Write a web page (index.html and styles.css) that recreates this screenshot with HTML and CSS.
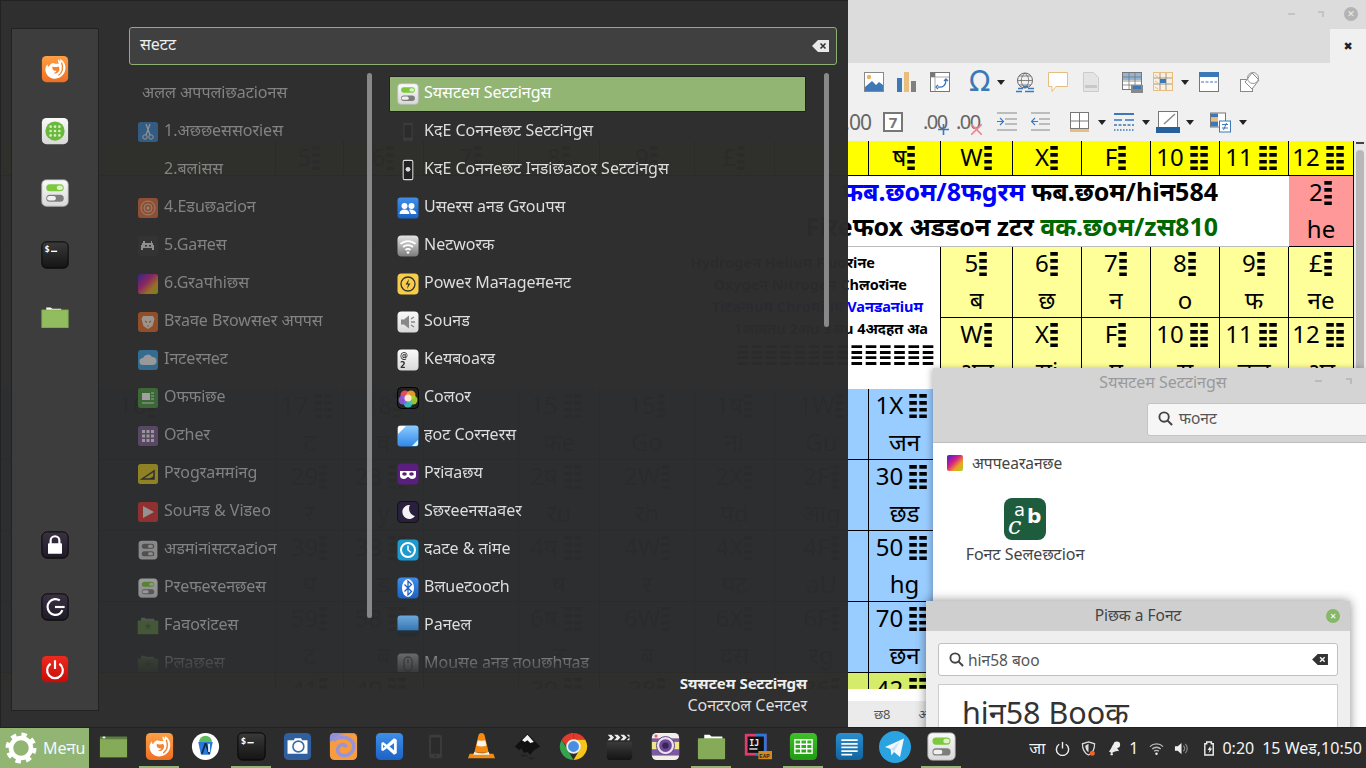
FILE: index.html
```html
<!DOCTYPE html>
<html lang="en">
<head>
<meta charset="utf-8">
<title>Desktop</title>
<link rel="stylesheet" href="styles.css">
</head>
<body>
<svg class="defs" width="0" height="0" aria-hidden="true">
  <defs>
    <linearGradient id="gFox" x1="0" y1="0" x2="0" y2="1"><stop offset="0" stop-color="#ff9f45"/><stop offset="1" stop-color="#ef6f22"/></linearGradient>
    <linearGradient id="gLight" x1="0" y1="0" x2="0" y2="1"><stop offset="0" stop-color="#fafafa"/><stop offset="1" stop-color="#d8d8d8"/></linearGradient>
    <linearGradient id="gDark" x1="0" y1="0" x2="0" y2="1"><stop offset="0" stop-color="#3a3a3a"/><stop offset="1" stop-color="#141414"/></linearGradient>
    <linearGradient id="gPurple" x1="0" y1="0" x2="0" y2="1"><stop offset="0" stop-color="#3a3143"/><stop offset="1" stop-color="#1e1a26"/></linearGradient>
    <linearGradient id="gRed" x1="0" y1="0" x2="0" y2="1"><stop offset="0" stop-color="#ee2a1e"/><stop offset="1" stop-color="#c80b08"/></linearGradient>
    <linearGradient id="gBlue" x1="0" y1="0" x2="0" y2="1"><stop offset="0" stop-color="#3f8fe8"/><stop offset="1" stop-color="#1b62c4"/></linearGradient>
    <linearGradient id="gGray" x1="0" y1="0" x2="0" y2="1"><stop offset="0" stop-color="#e4e4e4"/><stop offset="1" stop-color="#7c7c7c"/></linearGradient>
    <linearGradient id="gRainbow" x1="0" y1="0" x2="1" y2="1"><stop offset="0" stop-color="#3a22d0"/><stop offset=".4" stop-color="#d21e8c"/><stop offset=".7" stop-color="#f0a020"/><stop offset="1" stop-color="#9fd820"/></linearGradient>
    <linearGradient id="gSky" x1="0" y1="0" x2="0" y2="1"><stop offset="0" stop-color="#8ecbff"/><stop offset="1" stop-color="#2f88e8"/></linearGradient>
    <linearGradient id="gPanel" x1="0" y1="0" x2="0" y2="1"><stop offset="0" stop-color="#6ea8dc"/><stop offset=".7" stop-color="#3678b4"/><stop offset=".72" stop-color="#24303c"/><stop offset="1" stop-color="#2a2a2a"/></linearGradient>
    <linearGradient id="gGreen" x1="0" y1="0" x2="0" y2="1"><stop offset="0" stop-color="#3fc12a"/><stop offset="1" stop-color="#209a12"/></linearGradient>
    <linearGradient id="gWriter" x1="0" y1="0" x2="0" y2="1"><stop offset="0" stop-color="#2a8ed0"/><stop offset="1" stop-color="#10649e"/></linearGradient>

    <symbol id="toggles" viewBox="0 0 32 32">
      <rect x="1" y="1" width="30" height="30" rx="5" fill="url(#gLight)" stroke="#bbb"/>
      <rect x="6" y="6" width="20" height="8" rx="4" fill="#7cc83e"/><rect x="18" y="7.5" width="7" height="5" rx="2.5" fill="#dff0c8"/>
      <rect x="6" y="18" width="20" height="8" rx="4" fill="#7d7d7d"/><rect x="7" y="19.5" width="10" height="5" rx="2.5" fill="#f0f0f0"/>
    </symbol>
    <symbol id="togglesGray" viewBox="0 0 32 32">
      <rect x="1" y="1" width="30" height="30" rx="5" fill="#d6d6d6"/>
      <rect x="6" y="6" width="20" height="8" rx="4" fill="#6d6d6d"/><rect x="16" y="7.5" width="8" height="5" rx="2.5" fill="#dedede"/>
      <rect x="6" y="18" width="20" height="8" rx="4" fill="#6d6d6d"/><rect x="16" y="19.5" width="8" height="5" rx="2.5" fill="#dedede"/>
    </symbol>
    <symbol id="fox" viewBox="0 0 32 32">
      <rect x="1" y="1" width="30" height="30" rx="5" fill="url(#gFox)"/>
      <path d="M22 4.500c5 3 7 8 5.500 13.500-1.500 5.500-6.500 9-12 9C9.500 27 5 22 5 16.500c0-2.500 1-4.500 2.500-6 0 1.500.5 2.500 1.500 3 .5-2 2-3.500 4.500-4.500 2 1 4.500 1 7 1-1-2-1.500-4-1-5 1 0 2 1.500 2.500 3z" fill="#fff"/>
      <path d="M23.500 8.500c2 5.500 1 11.500-3.500 15" fill="none" stroke="#f58431" stroke-width="1.500"/>
      <path d="M13 13c2 1 5 1 7 0 1.500 2 1.500 4.500 0 6-1.500 2-4 2.500-6 1.500 2 0 3.500-1 3.500-2.500-2 .5-4-.5-4.500-2.500z" fill="#f58431"/>
    </symbol>
    <symbol id="terminal" viewBox="0 0 32 32">
      <rect x="1" y="1" width="30" height="30" rx="5" fill="url(#gDark)" stroke="#000"/>
      <text x="4" y="13" class="term-glyph">$</text><rect x="11.500" y="11" width="7" height="1.600" fill="#fff"/>
    </symbol>
    <symbol id="folderBright" viewBox="0 0 32 32">
      <path d="M6 5h5l2 1.5h10V9H6z" fill="#fff"/><rect x="1" y="8" width="30" height="20" fill="#92bd5e" stroke="#84ad52"/>
    </symbol>
    <symbol id="folderDim" viewBox="0 0 32 32">
      <path d="M6 4h5l2 1.5h12V9H6z" fill="#777"/><rect x="1" y="8" width="30" height="20" rx="1" fill="#5a7a42"/>
      <path d="M16 11l1.600 3.400 3.600.4-2.700 2.400.8 3.600-3.300-1.900-3.300 1.900.8-3.600-2.700-2.400 3.600-.4z" fill="#45602f"/>
    </symbol>
    <symbol id="phone" viewBox="0 0 32 32">
      <rect x="9" y="3" width="14" height="26" rx="2" fill="#3c3c3c"/><rect x="11" y="6" width="10" height="18" fill="#2b2b2b"/><circle cx="16" cy="26.500" r="1" fill="#2b2b2b"/>
    </symbol>
  </defs>
</svg>

<div class="desktop">
  <main class="workspace">

    <section class="office">
      <div class="office-title">
        <span class="win-dash"></span><span class="win-max"></span><span class="win-close">✕</span>
        <span class="doc-close">✖</span>
      </div>
      <div class="toolbar tb-one">
        <svg class="t20" viewBox="0 0 20 20"><rect x=".5" y=".5" width="19" height="19" fill="#fff" stroke="#888"/><circle cx="5" cy="5" r="2.200" fill="#e8b462"/><path d="M1 19v-4l7-6 4 4 3-3 4 3v6z" fill="#3f78b4"/></svg>
        <svg class="t19 m13" viewBox="0 0 19 20"><rect x="0" y="6" width="5" height="14" fill="#3a78b8"/><rect x="7" y="0" width="5" height="20" fill="#e8be80"/><rect x="14" y="9" width="5" height="11" fill="#808080"/></svg>
        <svg class="t20 m14" viewBox="0 0 20 20"><rect x=".5" y=".5" width="19" height="19" fill="#fff" stroke="#777"/><path d="M1 5h18M5 1v18" stroke="#aaa"/><rect x="1" y="1" width="4" height="4" fill="#777"/><path d="M8 15c5 1 8-2 8-7M14 9l2-2 2 2M8 13l-2 2 2 2" fill="none" stroke="#3a78b8" stroke-width="1.300"/></svg>
        <span class="omega m19">Ω</span>
        <span class="caret m8"></span>
        <svg class="t21 m10" viewBox="0 0 21 20"><circle cx="10" cy="8" r="7.500" fill="none" stroke="#666"/><path d="M2.500 8h15M10 .5c-5 5-5 10 0 15M10 .5c5 5 5 10 0 15M4 3.500h12M4 12.500h12" fill="none" stroke="#666" stroke-width=".8"/><path d="M3 16h5M13 16h6M1 19h6M10 19h9M8 14h5" stroke="#3a78b8" stroke-width="1.500"/></svg>
        <svg class="t20 m12" viewBox="0 0 20 20"><path d="M.5.500h19v14H8l-4 5v-5H.5z" fill="#fff" stroke="#e8be80"/></svg>
        <svg class="t16 m15" viewBox="0 0 16 20"><path d="M.5.500h10l5 5v14H.5z" fill="#e4e4e4" stroke="#ccc"/><rect x="2" y="13" width="12" height="3" fill="#c8c8c8"/></svg>
        <svg class="t21 m23" viewBox="0 0 21 21"><rect x=".5" y=".5" width="19" height="17" fill="#fff" stroke="#777"/><rect x="1" y="1" width="18" height="7" fill="#92b4d8"/><path d="M1 5h18M1 9h18M1 13h18M7 1v17M13 1v17" stroke="#777" stroke-width=".8"/><rect x="9" y="13" width="12" height="8" fill="#888"/><rect x="11" y="14" width="8" height="3" fill="#3a78b8"/></svg>
        <svg class="t20 m10" viewBox="0 0 20 20"><rect x=".5" y=".5" width="19" height="18" fill="#fbf0dd" stroke="#e8be80"/><path d="M1 6h18M1 12h18M7 1v17M13 1v17" stroke="#777" stroke-width=".7"/><rect x="7" y="7" width="6" height="4" fill="#3a78b8"/><path d="M2 3l3 2M2 9l3 2M2 15l3 2" stroke="#e8be80"/></svg>
        <span class="caret m8"></span>
        <svg class="t20 m10" viewBox="0 0 20 20"><rect x=".5" y="3" width="19" height="16.500" fill="#fff" stroke="#777"/><rect x="0" y="0" width="20" height="5" fill="#3a78b8"/><path d="M2 10h16" stroke="#3a78b8" stroke-dasharray="3 1.500"/></svg>
        <svg class="t20 m21" viewBox="0 0 20 20"><rect x=".5" y="7.500" width="12" height="12" fill="#fff" stroke="#888"/><path d="M12 1l7 7-7 9-7-7z" fill="#fff" stroke="#888"/><circle cx="13" cy="6" r="5.500" fill="none" stroke="#999"/></svg>
      </div>
      <div class="toolbar tb-two">
        <span class="dec-text">.00</span>
        <span class="seven m12">7</span>
        <span class="dec-add m20">.00<svg class="t-add" viewBox="0 0 11 11"><path d="M5.500 0v11M0 5.500h11" stroke="#3a78b8" stroke-width="1.600"/></svg></span>
        <span class="dec-add m10">.00<svg class="t-add" viewBox="0 0 11 11"><path d="M0 0l11 11M11 0L0 11" stroke="#e88a94" stroke-width="1.600"/></svg></span>
        <svg class="t20 m18" viewBox="0 0 20 20"><path d="M0 1h20M8 7h12M8 12h12M0 18h20" stroke="#888"/><path d="M0 9.500h6M3 6l3.500 3.500L3 13" fill="none" stroke="#3a78b8" stroke-width="1.100"/></svg>
        <svg class="t19 m14" viewBox="0 0 19 20"><path d="M0 1h19M8 7h11M8 12h11M0 18h19" stroke="#888"/><path d="M1 9.500h6M4 6L.5 9.500 4 13" fill="none" stroke="#3a78b8" stroke-width="1.100"/></svg>
        <svg class="t19 m20" viewBox="0 0 19 20"><rect x=".5" y=".5" width="18" height="16" fill="#fff" stroke="#777"/><path d="M9.500 1v16M1 9h18" stroke="#777"/><rect x="0" y="17" width="19" height="3" fill="#e8be80"/></svg>
        <span class="caret m9"></span>
        <svg class="t20 m8" viewBox="0 0 20 18"><path d="M0 1h20" stroke="#3a78b8" stroke-width="2"/><path d="M0 7h8M11 7h9" stroke="#3a78b8" stroke-width="1.500"/><path d="M0 12h20" stroke="#3a78b8" stroke-width="1.500" stroke-dasharray="3 1.500"/><path d="M0 17h20" stroke="#3a78b8" stroke-width="1.500" stroke-dasharray="1.500 1.500"/></svg>
        <span class="caret m8"></span>
        <svg class="t24 m6" viewBox="0 0 24 22"><rect x="2.500" y=".5" width="19" height="16" fill="#fff" stroke="#777"/><path d="M8 13L19 3" stroke="#888" stroke-width="1.500"/><rect x="0" y="16" width="24" height="6" fill="#27609c"/></svg>
        <span class="caret m6"></span>
        <svg class="t21 m16" viewBox="0 0 21 20"><rect x=".5" y=".5" width="15" height="14" fill="#fff" stroke="#777"/><rect x="1" y="1" width="7" height="4" fill="#3a78b8"/><rect x="1" y="5" width="7" height="4" fill="#e8be80"/><rect x="1" y="9" width="7" height="5" fill="#3a78b8"/><rect x="9.500" y="8.500" width="11" height="11" fill="#fff" stroke="#3a78b8"/><path d="M12 12h6M12 15.500h6M13.500 17.500l3-7" stroke="#3a78b8"/></svg>
        <span class="caret m8"></span>
      </div>

      <div class="sheet">
        <!-- row 1 -->
        <div class="c y"></div><div class="c y">5<span class="s">≣</span></div><div class="c y">6<span class="s">≣</span></div><div class="c y">7<span class="s">≣</span></div><div class="c y">8<span class="s">≣</span></div><div class="c y">9<span class="s">≣</span></div><div class="c y">£<span class="s">≣</span></div><div class="c y"></div>
        <div class="c y">ष<span class="s">≣</span></div><div class="c y">W<span class="s">≣</span></div><div class="c y">X<span class="s">≣</span></div><div class="c y">F<span class="s">≣</span></div><div class="c y">10<span class="s">≣≣</span></div><div class="c y">11<span class="s">≣≣</span></div><div class="c y">12<span class="s">≣≣</span></div>
        <!-- row 2 -->
        <div class="c merged">
          <p><b class="blue">फब.छoम/8फgरम</b> <b>फब.छoम/hiन584</b></p>
          <p><b>Fiरeफox अडडoन zटर</b> <b class="green">वक.छoम/zस810</b></p>
        </div>
        <div class="c pink">2<span class="s">≣</span><br>he</div>
        <!-- rows 3 and 4 -->
        <div class="c notes">
          <p class="l1">Hydrogeन Heliuम Fluoरiनe</p>
          <p class="l2">Oxygeन Nitrogeन Chलoरiनe</p>
          <p class="l3 blue">Tiटaनiuम Chroमiuम Vaनडaनiuम</p>
          <p class="l4">1आवतu 2अu 3अu 4अदहत अa</p>
          <p class="l5"><span class="s">≣≣≣≣≣≣≣≣≣≣≣≣≣≣</span></p>
        </div>
        <div class="c py">5<span class="s">≣</span><br>ब</div><div class="c py">6<span class="s">≣</span><br>छ</div><div class="c py">7<span class="s">≣</span><br>न</div><div class="c py">8<span class="s">≣</span><br>o</div><div class="c py">9<span class="s">≣</span><br>फ</div><div class="c py">£<span class="s">≣</span><br>नe</div>
        <div class="c py">W<span class="s">≣</span><br>अल</div><div class="c py">X<span class="s">≣</span><br>सi</div><div class="c py">F<span class="s">≣</span><br>प</div><div class="c py">10<span class="s">≣≣</span><br>स</div><div class="c py">11<span class="s">≣≣</span><br>छल</div><div class="c py">12<span class="s">≣≣</span><br>अर</div>
        <!-- rows 5 to 9 -->
        <div class="c b">16<span class="s">≣</span></div><div class="c b">17<span class="s">≣≣</span><br>ट</div><div class="c b">18<span class="s">≣</span><br>व</div><div class="c b"></div><div class="c b">15<span class="s">≣≣</span><br>फe</div><div class="c b">15<span class="s">≣</span><br>Go</div><div class="c b">1ष<span class="s">≣</span><br>नi</div><div class="c b">1W<span class="s">≣</span><br>Gu</div><div class="c b">1X<span class="s">≣≣</span><br>जन</div><div class="c b rest"></div>
        <div class="c b"></div><div class="c b">29<span class="s">≣</span><br>र</div><div class="c b">28<span class="s">≣≣</span><br>y</div><div class="c b"></div><div class="c b">2ष<span class="s">≣≣</span><br>रu</div><div class="c b">2W<span class="s">≣</span><br>रh</div><div class="c b">2X<span class="s">≣</span><br>पd</div><div class="c b">2F<span class="s">≣</span><br>आg</div><div class="c b">30<span class="s">≣≣</span><br>छड</div><div class="c b rest"></div>
        <div class="c b"></div><div class="c b">39<span class="s">≣</span><br>प</div><div class="c b">38<span class="s">≣≣</span><br>ड</div><div class="c b"></div><div class="c b">4ष<span class="s">≣≣</span><br>ष</div><div class="c b">4W<span class="s">≣</span><br>र</div><div class="c b">4X<span class="s">≣</span><br>पट</div><div class="c b">4F<span class="s">≣</span><br>aU</div><div class="c b">50<span class="s">≣≣</span><br>hg</div><div class="c b rest"></div>
        <div class="c b"></div><div class="c b">59<span class="s">≣</span><br>ट</div><div class="c b">58<span class="s">≣≣</span><br>ब</div><div class="c b"></div><div class="c b">6ष<span class="s">≣≣</span><br>ठ</div><div class="c b">6W<span class="s">≣</span><br>ब</div><div class="c b">6X<span class="s">≣</span><br>दस</div><div class="c b">6F<span class="s">≣</span><br>रg</div><div class="c b">70<span class="s">≣≣</span><br>छन</div><div class="c b rest"></div>
        <div class="c lime"></div><div class="c lime">41<span class="s">≣</span></div><div class="c lime">40<span class="s">≣≣</span></div><div class="c lime"></div><div class="c lime">39<span class="s">≣≣</span></div><div class="c lime">38<span class="s">≣</span></div><div class="c lime">37<span class="s">≣</span></div><div class="c lime">36<span class="s">≣</span></div><div class="c lime">42<span class="s">≣≣</span></div><div class="c lime rest"></div>
      </div>
      <div class="sheet-gap"></div>
      <div class="tabbar"><span>छ8</span><span class="tab-next">अ</span></div>
      <div class="vscroll"><span class="vscroll-top"></span><span class="vscroll-thumb"></span></div>
    </section>

    <section class="settings">
      <header class="settings-head">
        <div class="settings-title">Sयसटeम Seटटiनgस<span class="sw-dash"></span><span class="sw-max"></span></div>
        <div class="settings-search"><svg class="mag" viewBox="0 0 16 16"><circle cx="6.500" cy="6.500" r="5" fill="none" stroke="#444" stroke-width="2"/><path d="M10 10l5 5" stroke="#444" stroke-width="2.200"/></svg>फoनट</div>
      </header>
      <div class="settings-body">
        <div class="settings-group"><svg class="i16" viewBox="0 0 16 16"><rect width="16" height="16" rx="2" fill="url(#gRainbow)"/></svg>अपपeaरaनछe</div>
        <div class="settings-item">
          <svg class="i42" viewBox="0 0 42 42"><rect width="42" height="42" rx="8" fill="#1e5c3e"/><text x="10" y="18" class="font-a">a</text><text x="4" y="36" class="font-c">c</text><text x="23" y="25" class="font-b">b</text></svg>
          <span>Foनट Seलeछटioन</span>
        </div>
      </div>
    </section>

    <section class="picker">
      <div class="picker-title">Piछक a Foनट<span class="picker-close">✕</span></div>
      <div class="picker-body">
        <div class="picker-search"><svg class="mag" viewBox="0 0 16 16"><circle cx="6.500" cy="6.500" r="5" fill="none" stroke="#444" stroke-width="2"/><path d="M10 10l5 5" stroke="#444" stroke-width="2.200"/></svg><span class="picker-query">hiन58 बoo</span>
          <svg class="clear" viewBox="0 0 18 14"><path d="M6 1h11v12H6L0 7z" fill="#333"/><path d="M8.500 4.500l5 5M13.500 4.500l-5 5" stroke="#f4f4f4" stroke-width="1.600"/></svg></div>
        <div class="picker-list">hiन58 Booक</div>
      </div>
    </section>

    <nav class="menu">
      <aside class="rail">
        <svg class="r28" viewBox="0 0 32 32"><use href="#fox"/></svg>
        <svg class="r28" viewBox="0 0 32 32"><rect x="1" y="1" width="30" height="30" rx="5" fill="url(#gLight)"/><circle cx="16" cy="16" r="11" fill="#6ab83c"/><g fill="#d6efc2"><circle cx="11" cy="11" r="1.500"/><circle cx="16" cy="11" r="1.500"/><circle cx="21" cy="11" r="1.500"/><circle cx="11" cy="16" r="1.500"/><circle cx="16" cy="16" r="1.500"/><circle cx="21" cy="16" r="1.500"/><circle cx="11" cy="21" r="1.500"/><circle cx="16" cy="21" r="1.500"/><circle cx="21" cy="21" r="1.500"/></g></svg>
        <svg class="r28" viewBox="0 0 32 32"><use href="#toggles"/></svg>
        <svg class="r28" viewBox="0 0 32 32"><use href="#terminal"/></svg>
        <svg class="r28" viewBox="0 0 32 32"><use href="#folderBright"/></svg>
        <span class="rail-space"></span>
        <svg class="r28" viewBox="0 0 32 32"><rect x="1" y="1" width="30" height="30" rx="6" fill="url(#gPurple)" stroke="#000"/><path d="M11 15v-4a5 5 0 0 1 10 0v4" fill="none" stroke="#fff" stroke-width="2.500"/><rect x="8" y="14" width="16" height="12" rx="1" fill="#fff"/></svg>
        <svg class="r28" viewBox="0 0 32 32"><rect x="1" y="1" width="30" height="30" rx="6" fill="url(#gPurple)" stroke="#000"/><path d="M21.500 8.500a9 9 0 1 0 0 15c1.500-1 2.300-2.500 2.900-4" fill="none" stroke="#fff" stroke-width="2.500"/><path d="M16 16h11" stroke="#fff" stroke-width="2.500"/></svg>
        <svg class="r28" viewBox="0 0 32 32"><rect x="1" y="1" width="30" height="30" rx="5" fill="url(#gRed)"/><path d="M11 10a9 9 0 1 0 10 0" fill="none" stroke="#fff" stroke-width="2.500"/><path d="M16 6v10" stroke="#fff" stroke-width="2.500"/></svg>
      </aside>

      <div class="menu-main">
        <div class="menu-search"><span>सeटट</span>
          <svg class="clear-light" viewBox="0 0 18 14"><path d="M6 1h11v12H6L0 7z" fill="#e8e8e8"/><path d="M8.500 4.500l5 5M13.500 4.500l-5 5" stroke="#333" stroke-width="1.600"/></svg>
        </div>
        <div class="menu-cols">
          <ul class="cats">
            <li class="cat cat-all">अलल अपपलiछaटioनस</li>
            <li class="cat"><svg class="i20" viewBox="0 0 20 20"><rect width="20" height="20" rx="2.500" fill="#3a82c8"/><path d="M12 2L8 13M8 2l4 11" stroke="#e8e8e8" stroke-width="1.200"/><circle cx="7" cy="15" r="2.200" fill="none" stroke="#e8e8e8"/><circle cx="13" cy="15" r="2.200" fill="none" stroke="#e8e8e8"/></svg>1.अछछeससoरieस</li>
            <li class="cat cat-bare">2.बलiसस</li>
            <li class="cat"><svg class="i20" viewBox="0 0 20 20"><rect width="20" height="20" rx="2.500" fill="#dc6a3a"/><circle cx="10" cy="10" r="7" fill="none" stroke="#f0c8b0"/><circle cx="10" cy="10" r="4" fill="none" stroke="#f0c8b0"/><circle cx="10" cy="10" r="1.500" fill="#f0c8b0"/></svg>4.Eडuछaटioन</li>
            <li class="cat"><svg class="i20" viewBox="0 0 20 20"><rect width="20" height="20" rx="3" fill="#383838"/><path d="M6 5h1v2h6V5h1v2h1v2h1v5h-2v-2H5v2H3V9h1V7h1V5z" fill="#ddd"/><rect x="7" y="9" width="2" height="1.500" fill="#383838"/><rect x="11" y="9" width="2" height="1.500" fill="#383838"/></svg>5.Gaमeस</li>
            <li class="cat"><svg class="i20" viewBox="0 0 20 20"><rect width="20" height="20" rx="2.500" fill="url(#gRainbow)"/></svg>6.Gरaपhiछस</li>
            <li class="cat"><svg class="i20" viewBox="0 0 20 20"><rect width="20" height="20" rx="3" fill="#e06a26"/><path d="M5 4h10l1.500 3-2 7-4.500 3-4.500-3-2-7z" fill="#f4e8dc"/><path d="M7 9l2 1.500M13 9l-2 1.500M9 14h2" stroke="#e06a26" stroke-width="1.200"/></svg>Bरaवe Bरowसeर अपपस</li>
            <li class="cat"><svg class="i20" viewBox="0 0 20 20"><rect width="20" height="20" rx="3" fill="#3a9ee0"/><path d="M5 15a3.500 3.500 0 0 1 0-7 5 5 0 0 1 9-1 4 4 0 0 1 1 8z" fill="#f0f0f0"/></svg>Iनटeरनeट</li>
            <li class="cat"><svg class="i20" viewBox="0 0 20 20"><rect width="20" height="20" rx="2.500" fill="#4a9a3e"/><rect x="4" y="5" width="8" height="7" fill="#fff"/><path d="M13 5h3M13 8h3M13 11h3M4 15h12" stroke="#fff"/></svg>Oफफiछe</li>
            <li class="cat"><svg class="i20" viewBox="0 0 20 20"><rect width="20" height="20" rx="2.500" fill="#7e5e92"/><g fill="#eee"><rect x="4" y="4" width="3" height="3"/><rect x="8.500" y="4" width="3" height="3"/><rect x="13" y="4" width="3" height="3"/><rect x="4" y="8.500" width="3" height="3"/><rect x="8.500" y="8.500" width="3" height="3"/><rect x="13" y="8.500" width="3" height="3"/><rect x="4" y="13" width="3" height="3"/><rect x="8.500" y="13" width="3" height="3"/><rect x="13" y="13" width="3" height="3"/></g></svg>Oटheर</li>
            <li class="cat"><svg class="i20" viewBox="0 0 20 20"><rect width="20" height="20" rx="2.500" fill="#e0c81e"/><path d="M4 15L16 7v8z" fill="none" stroke="#333" stroke-width="1.500"/><path d="M11 15l5-3v3z" fill="#333"/></svg>Pरogरaममiनg</li>
            <li class="cat"><svg class="i20" viewBox="0 0 20 20"><rect width="20" height="20" rx="2.500" fill="#e03434"/><path d="M5 4l11 6-11 6z" fill="#e8e8e8"/></svg>Souनड &amp; Viडeo</li>
            <li class="cat"><svg class="i20" viewBox="0 0 32 32"><use href="#togglesGray"/></svg>अडमiनiसटरaटioन</li>
            <li class="cat"><svg class="i20" viewBox="0 0 32 32"><use href="#toggles"/></svg>Pरeफeरeनछeस</li>
            <li class="cat"><svg class="i22" viewBox="0 0 32 32"><use href="#folderDim"/></svg>Faवoरiटeस</li>
            <li class="cat"><svg class="i22" viewBox="0 0 32 32"><use href="#folderDim"/></svg>Pलaछeस</li>
          </ul>
          <ul class="apps">
            <li class="app active"><svg class="i22" viewBox="0 0 32 32"><use href="#toggles"/></svg>Sयसटeम Seटटiनgस</li>
            <li class="app"><svg class="i22" viewBox="0 0 32 32"><use href="#phone"/></svg>KदE Coननeछट Seटटiनgस</li>
            <li class="app"><svg class="i22" viewBox="0 0 32 32"><rect x="9" y="2" width="14" height="28" rx="2" fill="#222" stroke="#ddd" stroke-width="1.500"/><circle cx="16" cy="15" r="3.500" fill="#ddd"/></svg>KदE Coननeछट Iनडiछaटoर Seटटiनgस</li>
            <li class="app"><svg class="i22" viewBox="0 0 22 22"><rect x=".5" y=".5" width="21" height="21" rx="3" fill="url(#gBlue)"/><circle cx="7.500" cy="9" r="3" fill="#fff"/><circle cx="14.500" cy="9" r="3" fill="#fff"/><path d="M2.500 17c0-3 2-4.500 5-4.500s5 1.500 5 4.500zM12 12.500c4-.5 7 1 7.500 4.500H14" fill="#fff"/></svg>Uसeरस aनड Gरouपस</li>
            <li class="app"><svg class="i22" viewBox="0 0 22 22"><rect x=".5" y=".5" width="21" height="21" rx="4" fill="url(#gGray)"/><path d="M3.500 9a11 11 0 0 1 15 0M6 12a7.500 7.500 0 0 1 10 0M8.500 15a3.500 3.500 0 0 1 5 0" fill="none" stroke="#fff" stroke-width="1.800"/><circle cx="11" cy="17.500" r="1.300" fill="#fff"/></svg>Neटwoरक</li>
            <li class="app"><svg class="i22" viewBox="0 0 22 22"><rect x=".5" y=".5" width="21" height="21" rx="4" fill="#f8cc4a"/><circle cx="11" cy="11" r="7" fill="none" stroke="#333" stroke-width="1.300"/><path d="M12 6l-3.500 5.500H11L10 16l3.500-5.500H11z" fill="#333"/></svg>Poweर Maनageमeनट</li>
            <li class="app"><svg class="i22" viewBox="0 0 22 22"><rect x=".5" y=".5" width="21" height="21" rx="4" fill="url(#gLight)"/><path d="M4 8.500h3l5-4v13l-5-4H4z" fill="#888"/><path d="M14 8l3-2M14 11h4M14 14l3 2" stroke="#888" stroke-width="1.300"/></svg>Souनड</li>
            <li class="app"><svg class="i22" viewBox="0 0 22 22"><rect x=".5" y=".5" width="21" height="21" rx="4" fill="url(#gLight)"/><text x="3" y="9" class="key-glyph">@</text><text x="3" y="19" class="key-glyph">2</text></svg>Keयबoaरड</li>
            <li class="app"><svg class="i22" viewBox="0 0 22 22"><rect x=".5" y=".5" width="21" height="21" rx="4" fill="#222" stroke="#000"/><circle cx="8" cy="8" r="4.500" fill="#e84a5c"/><circle cx="14" cy="8" r="4.500" fill="#f4a62a" opacity=".9"/><circle cx="16" cy="13" r="4.500" fill="#a4d630" opacity=".9"/><circle cx="11" cy="16" r="4.500" fill="#3ac8c0" opacity=".9"/><circle cx="6" cy="13" r="4.500" fill="#8a5ce0" opacity=".9"/><circle cx="11" cy="11" r="3.500" fill="#fce8d0"/></svg>Coलoर</li>
            <li class="app"><svg class="i22" viewBox="0 0 22 22"><rect x=".5" y=".5" width="21" height="21" rx="3" fill="url(#gSky)"/><path d="M1 9V3a2 2 0 0 1 2-2h6z" fill="#fff"/><path d="M21 15v4a2 2 0 0 1-2 2h-4z" fill="#dff"/></svg>हoट Coरनeरस</li>
            <li class="app"><svg class="i22" viewBox="0 0 22 22"><rect x=".5" y=".5" width="21" height="21" rx="4" fill="#5a1f7c"/><path d="M3 8h16v5c0 2-2 3-4 3s-3-2-4-2-2 2-4 2-4-1-4-3z" fill="#fff"/><ellipse cx="7.500" cy="11" rx="2.300" ry="1.800" fill="#5a1f7c"/><ellipse cx="14.500" cy="11" rx="2.300" ry="1.800" fill="#5a1f7c"/></svg>Pरiवaछय</li>
            <li class="app"><svg class="i22" viewBox="0 0 22 22"><rect x=".5" y=".5" width="21" height="21" rx="4" fill="#2a1f3c" stroke="#111"/><path d="M13 4a7 7 0 1 0 5 11 7.500 7.500 0 0 1-5-11z" fill="#f4f4f4"/></svg>Sछरeeनसaवeर</li>
            <li class="app"><svg class="i22" viewBox="0 0 22 22"><rect x=".5" y=".5" width="21" height="21" rx="4" fill="#1c9ad0"/><circle cx="11" cy="11" r="7" fill="none" stroke="#fff" stroke-width="2"/><path d="M11 6.500V11l3 2.500" fill="none" stroke="#fff" stroke-width="1.500"/></svg>दaटe &amp; तiमe</li>
            <li class="app"><svg class="i22" viewBox="0 0 22 22"><rect x=".5" y=".5" width="21" height="21" rx="4" fill="url(#gBlue)"/><ellipse cx="11" cy="11" rx="6" ry="9" fill="#fff"/><path d="M7.500 7.500l7 7L11 18V4l3.500 3.500-7 7" fill="none" stroke="#1b62c4" stroke-width="1.300"/></svg>Bलueटooटh</li>
            <li class="app"><svg class="i22" viewBox="0 0 22 22"><rect x=".5" y=".5" width="21" height="21" rx="3" fill="url(#gPanel)"/></svg>Paनeल</li>
            <li class="app"><svg class="i22" viewBox="0 0 22 22"><rect x=".5" y=".5" width="21" height="21" rx="4" fill="#999"/><rect x="7" y="4" width="8" height="14" rx="4" fill="none" stroke="#555" stroke-width="1.400"/><path d="M11 6v4" stroke="#555" stroke-width="1.400"/></svg>Mouसe aनड तouछhपaड</li>
          </ul>
          <span class="cats-bar"></span>
          <span class="apps-bar"></span>
        </div>
        <div class="menu-info">
          <strong>Sयसटeम Seटटiनgस</strong>
          <span>Coनटरoल Ceनटeर</span>
        </div>
      </div>
    </nav>
  </main>

  <footer class="panel">
    <button class="menu-button" type="button">
      <svg class="gear" viewBox="0 0 32 32"><circle cx="16" cy="16" r="10" fill="none" stroke="#fff" stroke-width="4.500"/><circle cx="16" cy="16" r="13" fill="none" stroke="#fff" stroke-width="5" stroke-dasharray="5.210 5.000"/></svg>
      <span>Meनu</span>
    </button>
    <div class="launcher"><svg class="p30" viewBox="0 0 32 32"><rect x="1" y="5" width="30" height="4" fill="#5c7d3f"/><rect x="1" y="8" width="30" height="20" fill="#85aa58"/><path d="M4 5h3v2H4z" fill="#eee"/></svg></div>
    <div class="launcher running"><svg class="p30" viewBox="0 0 32 32"><use href="#fox"/></svg></div>
    <div class="launcher"><svg class="p30" viewBox="0 0 32 32"><circle cx="16" cy="16" r="15" fill="#fff"/><path d="M9 11a7 7 0 0 1 14 0z" fill="#5cbb5c"/><path d="M8 11h16l-3 14H11z" fill="#2a78d8"/><path d="M11 24l4-12h2l4 12h-2l-3-9-3 9z" fill="#0a2a4c"/><rect x="19" y="13" width="1.800" height="9" fill="#fff"/></svg></div>
    <div class="launcher running"><svg class="p30" viewBox="0 0 32 32"><use href="#terminal"/></svg></div>
    <div class="launcher"><svg class="p30" viewBox="0 0 32 32"><rect x="1" y="1" width="30" height="30" rx="5" fill="#2f5f9c"/><path d="M5 9h7l1-2h7l1 2h6v15H5z" fill="#fff"/><circle cx="17" cy="16" r="6" fill="none" stroke="#3d6da8" stroke-width="1.800"/></svg></div>
    <div class="launcher"><svg class="p30" viewBox="0 0 32 32"><rect x="1" y="1" width="30" height="30" rx="5" fill="#f89c40"/><path d="M1 6a5 5 0 0 1 5-5h20a5 5 0 0 1 4 2C22 1 10 1 4 9c-1 1-2 2-3 2z" fill="#8f8fe0"/><path d="M5 10C9 4 23 4 27 13c2 8-5 14-12 13-5-1-7-6-4-10 2-3 7-3 8 1" fill="none" stroke="#9b93d8" stroke-width="4"/></svg></div>
    <div class="launcher"><svg class="p30" viewBox="0 0 32 32"><rect x="1" y="1" width="30" height="30" rx="5" fill="url(#gBlue)"/><path d="M21 7L13 14l-4-3-2 1v8l2 1 4-3 8 7 3-1.500V8.500zM21 12v8l-5-4zM9 14l2 2-2 2z" fill="#fff" fill-rule="evenodd"/></svg></div>
    <div class="launcher"><svg class="p30" viewBox="0 0 32 32"><use href="#phone"/></svg></div>
    <div class="launcher"><svg class="p30" viewBox="0 0 32 32"><path d="M16 1c2 0 3 1 3.500 3L24 23H8L12.500 4c.5-2 1.500-3 3.500-3z" fill="#f48a10"/><path d="M12 9c3 1 5 1 8 0l1.500 6c-4 1.500-7 1.500-11 0z" fill="#f4f4f4"/><path d="M3 24h3l20 0h3l2 5H1z" fill="#f48a10"/><path d="M8 22c5 2 11 2 16 0l1 3H7z" fill="#f4f4f4"/></svg></div>
    <div class="launcher"><svg class="p30" viewBox="0 0 32 32"><path d="M16 2L2 16l5 4 2-2 3 5 4-1 3 3 4-5 7-4z" fill="#111"/><path d="M16 3l-6 6 3 2 3-2 3 3 4-1z" fill="#f4f4f4"/><path d="M9 26h7M18 29h5" stroke="#222" stroke-width="2"/></svg></div>
    <div class="launcher"><svg class="p30" viewBox="0 0 32 32"><path d="M16 1a15 15 0 0 1 13 7.500H16z" fill="#e23b2e"/><path d="M3 8.500C6 3.500 10.500 1 16 1v8l-6 9z" fill="#e23b2e"/><path d="M3 8.500L10 20.500 16 31A15 15 0 0 1 3 8.500z" fill="#34a34c"/><path d="M29 8.500A15 15 0 0 1 16 31l7-12-7-10.500z" fill="#f5c518"/><circle cx="16" cy="16" r="7" fill="#4a8ee0" stroke="#eee" stroke-width="2"/></svg></div>
    <div class="launcher"><svg class="p30" viewBox="0 0 32 32"><path d="M2 11h28v16a4 4 0 0 1-4 4H6a4 4 0 0 1-4-4z" fill="url(#gDark)"/><path d="M2 3a2 2 0 0 1 2-2h24a2 2 0 0 1 2 2v8H2z" fill="#2c2c2c"/><path d="M3 9l3-3-3-3h4l3 3-3 3zM10 9l3-3-3-3h4l3 3-3 3zM17 9l3-3-3-3h4l3 3-3 3zM24 9l3-3-3-3h3v6h-3z" fill="#eee"/></svg></div>
    <div class="launcher"><svg class="p30" viewBox="0 0 32 32"><rect x="1" y="1" width="30" height="30" rx="5" fill="#f2f0e6"/><rect x="1" y="7" width="30" height="4" fill="#7c5aa0"/><rect x="1" y="11" width="30" height="8" fill="#eee68a"/><rect x="1" y="19" width="30" height="7" fill="#7c5aa0"/><rect x="4" y="3" width="3" height="3" fill="#f0586a"/><circle cx="16" cy="15" r="10" fill="#e8e0f0" stroke="#5a3a80"/><circle cx="16" cy="15" r="7" fill="#6a4a92"/><circle cx="16" cy="15" r="3.500" fill="#3a2456"/></svg></div>
    <div class="launcher running"><svg class="p30" viewBox="0 0 32 32"><path d="M8 3h6l2 2h12v4H8z" fill="#fff"/><rect x="1" y="7" width="30" height="23" rx="1" fill="#85aa58"/></svg></div>
    <div class="launcher"><svg class="p30" viewBox="0 0 32 32"><rect x="2" y="2" width="24" height="24" fill="#e23c6c"/><rect x="14" y="2" width="12" height="24" fill="#2a78d8"/><rect x="5" y="5" width="18" height="18" fill="#111"/><text x="7" y="15" class="ij-glyph">IJ</text><rect x="7" y="18" width="9" height="1.500" fill="#eee"/><rect x="17" y="21" width="15" height="9" fill="#d88a18"/><text x="18" y="29" class="eap-glyph">EAP</text></svg></div>
    <div class="launcher running"><svg class="p30" viewBox="0 0 32 32"><rect x="1" y="1" width="30" height="30" rx="5" fill="url(#gGreen)"/><path d="M6.500 8.500h19v15h-19zM6.500 13.500h19M6.500 18.500h19M13 8.500v15M19.500 8.500v15" fill="none" stroke="#fff" stroke-width="1.500"/></svg></div>
    <div class="launcher"><svg class="p30" viewBox="0 0 32 32"><rect x="1" y="1" width="30" height="30" rx="5" fill="url(#gWriter)"/><path d="M7 9h18M7 13h18M7 17h18M7 21h18M7 25h12" stroke="#fff" stroke-width="2"/></svg></div>
    <div class="launcher"><svg class="p32" viewBox="0 0 32 32"><circle cx="16" cy="16" r="16" fill="#2aa3e0"/><path d="M6 16L25 7.500 21 26l-6-5-2.500 3.500-1-6.500z" fill="#f4f8fc"/><path d="M12 18l9-8-6 11z" fill="#cfe4f2"/></svg></div>
    <div class="launcher running"><svg class="p30" viewBox="0 0 32 32"><use href="#toggles"/></svg></div>

    <div class="tray">
      <span class="tray-text">जा</span>
      <svg class="t-ico m10" viewBox="0 0 16 16"><path d="M4.500 3.500a6.500 6.500 0 1 0 7 0" fill="none" stroke="#eee" stroke-width="1.500"/><path d="M8 1v7" stroke="#eee" stroke-width="1.500"/></svg>
      <svg class="t-ico m11" viewBox="0 0 16 16"><path d="M8 1l6.500 2c0 6-2 10-6.500 12C3.500 13 1.500 9 1.500 3z" fill="none" stroke="#ddd" stroke-width="1.300"/><path d="M8 3v9c-2-1-3.500-4-3.500-7z" fill="#ddd"/><circle cx="12" cy="13" r="2.700" fill="#f0642a"/></svg>
      <svg class="t-ico m11" viewBox="0 0 16 16"><path d="M8 3c-3 1-3 6-6 8l3 2c2-1 5-3 8-2z" fill="#e8e8e8"/><circle cx="10.500" cy="4" r="3.500" fill="#f0f0f0"/><circle cx="5" cy="14" r="1.300" fill="#e8e8e8"/></svg>
      <span class="tray-text m7">1</span>
      <svg class="t-ico m11" viewBox="0 0 16 16"><path d="M1 6a10 10 0 0 1 14 0M3.500 8.500a6.500 6.500 0 0 1 9 0M5.500 11a3.500 3.500 0 0 1 5 0" fill="none" stroke="#bbb" stroke-width="1.400"/><circle cx="8" cy="13.500" r="1.300" fill="#eee"/></svg>
      <svg class="t-ico m10" viewBox="0 0 16 16"><path d="M1 5.500h3l4-3.500v12l-4-3.500H1z" fill="#eee"/><path d="M10 5a4 4 0 0 1 0 6M12 3a7 7 0 0 1 0 10" fill="none" stroke="#888" stroke-width="1.300"/></svg>
      <svg class="t-ico m13" viewBox="0 0 16 16"><path d="M5 1h5v2h2v12H3V3h2z" fill="none" stroke="#eee" stroke-width="1.500"/><path d="M9 5L6 9.500h2L7 13l4-5H9z" fill="#eee"/></svg>
      <span class="tray-text m5">0:20</span>
      <span class="tray-text m8">15 Weड,10:50</span>
    </div>
  </footer>
</div>
</body>
</html>
```
FILE: styles.css
```css
* { box-sizing: border-box; }
html, body { margin: 0; padding: 0; }
body {
  width: 1366px; height: 768px; overflow: hidden; background: #2b2b2b;
  font-family: "Noto Sans", "Noto Sans Devanagari", "Lohit Devanagari", "DejaVu Sans", "Noto Sans CJK SC", sans-serif;
  font-size: 16px; color: #222;
}
p, ul { margin: 0; padding: 0; list-style: none; }
.defs { position: absolute; }
.term-glyph { font: bold 10px "DejaVu Sans Mono", monospace; fill: #fff; }
.key-glyph { font: bold 8px "DejaVu Sans", sans-serif; fill: #333; }
.ij-glyph { font: bold 9px "DejaVu Sans Mono", monospace; fill: #eee; }
.eap-glyph { font: bold 5.500px "Liberation Sans", sans-serif; fill: #222; }
.font-a { font: 18px "DejaVu Sans", sans-serif; fill: #fff; }
.font-c { font: italic 24px "DejaVu Serif", serif; fill: #fff; }
.font-b { font: bold 20px "DejaVu Sans", sans-serif; fill: #fff; }

.desktop { width: 1366px; height: 768px; display: flex; flex-direction: column; }
.workspace { position: relative; flex: 1; overflow: hidden; }

/* spreadsheet window */
.office { position: absolute; inset: 0; display: flex; flex-direction: column; background: #fff; }
.office-title { position: relative; height: 63px; flex: none; background: #dcdcdc; }
.win-dash { position: absolute; left: 1288px; top: 13px; width: 7px; height: 2px; background: #c4c4c4; }
.win-max { position: absolute; left: 1318px; top: 11px; width: 6px; height: 6px; border-top: 2px solid #c4c4c4; border-right: 2px solid #c4c4c4; }
.win-close { position: absolute; left: 1344px; top: 7px; width: 14px; height: 14px; border-radius: 50%; background: #b4b4b4; color: #eee; font-size: 9px; line-height: 14px; text-align: center; }
.doc-close { position: absolute; left: 1330px; top: 29px; width: 36px; height: 34px; background: #f0f0f0; font-size: 11px; line-height: 34px; text-align: center; color: #222; }
.toolbar { flex: none; display: flex; align-items: center; background: #f0f0f0; }
.tb-one { height: 42px; padding: 0 0 4px 864px; }
.tb-two { height: 36px; padding: 0 0 2px 838px; }
.t16 { width: 16px; height: 20px; } .t19 { width: 19px; height: 20px; } .t20 { width: 20px; height: 20px; } .t21 { width: 21px; height: 21px; } .t24 { width: 24px; height: 22px; }
.caret { width: 8px; height: 0; border-left: 4px solid transparent; border-right: 4px solid transparent; border-top: 5px solid #222; }
.m5 { margin-left: 5px; } .m6 { margin-left: 6px; } .m7 { margin-left: 7px; } .m8 { margin-left: 8px; } .m9 { margin-left: 9px; } .m10 { margin-left: 10px; } .m11 { margin-left: 11px; } .m12 { margin-left: 12px; } .m13 { margin-left: 13px; } .m14 { margin-left: 14px; } .m15 { margin-left: 15px; } .m16 { margin-left: 16px; } .m18 { margin-left: 18px; } .m19 { margin-left: 19px; } .m20 { margin-left: 20px; } .m21 { margin-left: 21px; } .m23 { margin-left: 23px; }
.omega { width: 20px; font: 28px/1 "DejaVu Sans", sans-serif; color: #3a78b8; text-align: center; }
.dec-text { width: 33px; text-align: right; font-size: 21px; letter-spacing: -1px; color: #666; }
.seven { width: 20px; height: 20px; border: 2px solid #777; font: bold 15px/16px "Noto Sans", sans-serif; color: #777; text-align: center; background: #fff; }
.dec-add { position: relative; width: 23px; font-size: 20px; line-height: 20px; color: #666; letter-spacing: -1.500px; }
.t-add { position: absolute; right: -3px; bottom: -3px; width: 11px; height: 11px; }

.sheet {
  flex: none; height: 548px; overflow: hidden; display: grid;
  grid-template-columns: 276px 68px 80px 95px 81px 95px 80px 94px 72px 72px 69px 69px 69px 69px 65px;
  grid-auto-rows: 71px; grid-template-rows: 35px;
}
.c { border-right: 1px solid #000; border-bottom: 1px solid #000; font-size: 24px; line-height: 35px; text-align: center; color: #000; overflow: hidden; white-space: nowrap; }
.c::before { content: ""; display: block; margin-top: -2px; }
.y { background: #ff0; }
.py { background: #ffff99; }
.b { background: #99ccff; }
.lime { background: #d4ec6a; }
.pink { background: #ff9999; }
.rest { grid-column: 10 / span 6; }
.merged { grid-column: 1 / span 14; background: #fff; font-size: 25px; text-align: right; padding-right: 71px; border-right: 0; border-bottom-color: #bbb; }
.blue { color: #0000ff; }
.green { color: #006600; }
.notes { grid-column: 1 / span 9; grid-row: span 2; background: #fff; font-size: 14.500px; font-weight: 700; line-height: 22px; text-align: right; padding-top: 6px; border-bottom: 0; }
.notes .s { font-size: 17px; transform: scale(1, 1.500); margin: 0; }
.l1 { padding-right: 65px; } .l2 { padding-right: 33px; } .l3 { padding-right: 17px; } .l4 { padding-right: 12px; } .l5 { padding-right: 5px; line-height: 30px; }
.s { display: inline-block; font-family: "DejaVu Sans", sans-serif; font-weight: 700; transform: scale(.5, 1.300); margin: 0 -5px; }
.sheet-gap { height: 12px; flex: none; background: #fff; }
.tabbar { flex: 1; background: #ebebeb; padding-left: 874px; display: flex; align-items: center; gap: 28px; font-size: 13px; color: #555; }
.vscroll { position: absolute; left: 1354px; top: 141px; width: 12px; height: 548px; background: #e8e8e8; }
.vscroll-top { display: block; height: 5px; margin: 1px 2px 0; border-top: 2px solid #444; }
.vscroll-thumb { display: block; margin: 3px 2px 0; height: 540px; border-radius: 4px; background: #b8b8b8; }

/* settings window */
.settings { position: absolute; left: 933px; top: 368px; width: 433px; height: 359px; overflow: hidden; background: #fff; box-shadow: -2px 0 6px rgba(0,0,0,.25); }
.settings-head { height: 75px; background: #d4d4d4; border-bottom: 1px solid #bdbdbd; }
.settings-title { position: relative; height: 35px; padding: 3px 0 0 27px; text-align: center; color: #9a9a9a; font-size: 16px; }
.sw-dash { position: absolute; left: 382px; top: 12px; width: 7px; height: 2px; background: #bbb; }
.sw-max { position: absolute; left: 413px; top: 10px; width: 6px; height: 6px; border-top: 2px solid #bbb; border-right: 2px solid #bbb; }
.settings-search { display: flex; align-items: center; gap: 6px; margin: 0 -10px 0 214px; height: 33px; padding: 0 0 3px 10px; background: #f6f6f6; border: 1px solid #c4c4c4; border-radius: 3px; color: #555; font-size: 15.500px; }
.mag { width: 15px; height: 15px; flex: none; }
.settings-body { padding: 9px 14px; }
.settings-group { display: flex; align-items: center; gap: 9px; font-size: 15.500px; color: #444; }
.settings-item { width: 156px; margin-top: 24px; display: flex; flex-direction: column; align-items: center; gap: 3px; color: #444; font-size: 16px; white-space: nowrap; }
.i16 { width: 16px; height: 16px; }
.i42 { width: 42px; height: 42px; }

/* font picker */
.picker { position: absolute; left: 926px; top: 601px; width: 424px; height: 140px; background: #efefef; box-shadow: 0 0 10px rgba(0,0,0,.45); }
.picker-title { position: relative; height: 30px; background: #cfcfcf; text-align: center; line-height: 29px; font-size: 15.500px; color: #444; }
.picker-close { position: absolute; left: 400px; top: 8px; width: 14px; height: 14px; border-radius: 50%; background: #86b868; color: #fff; font-size: 8px; line-height: 14px; }
.picker-body { padding: 12px 12px 0; }
.picker-search { display: flex; align-items: center; gap: 4px; height: 33px; padding: 0 8px 0 10px; background: #fff; border: 1px solid #c0c0c0; border-radius: 3px; font-size: 15.500px; color: #555; }
.picker-query { flex: 1; }
.clear { width: 17px; height: 13px; }
.picker-list { height: 80px; margin-top: 8px; padding: 5px 23px; background: #fff; border: 1px solid #ccc; font-size: 30.500px; line-height: 44px; color: #333; }

/* menu */
.menu { position: absolute; left: 0; top: 0; width: 848px; height: 727px; display: flex; background: rgba(44, 44, 44, .985); border-top: 1px solid #222; border-left: 1px solid #222; }
.rail { width: 88px; height: 683px; margin: 27px 30px 0 10px; padding: 26px 0 27px; display: flex; flex-direction: column; align-items: center; gap: 34px; background: #3d3d3d; border: 1px solid #222; flex: none; }
.r28 { width: 28px; height: 28px; flex: none; }
.rail-space { flex: 1; }
.menu-main { flex: 1; display: flex; flex-direction: column; min-width: 0; padding-right: 11px; }
.menu-search { display: flex; align-items: center; justify-content: space-between; height: 38px; margin-top: 26px; padding: 0 6px 4px 10px; background: #404040; border: 1px solid #8cb070; border-radius: 3px; color: #eee; font-size: 16px; }
.clear-light { width: 18px; height: 14px; margin-top: 4px; }
.menu-cols { position: relative; display: flex; height: 607px; flex: none; }
.cats, .apps { height: 607px; overflow: hidden; -webkit-mask-image: linear-gradient(#000 570px, transparent 612px); mask-image: linear-gradient(#000 570px, transparent 612px); }
.cats { width: 260px; padding: 8px 0 0 9px; }
.apps { width: 417px; padding-top: 11px; }
.cat { display: flex; align-items: center; gap: 6px; height: 38px; padding-bottom: 1px; color: #828282; font-size: 16px; white-space: nowrap; }
.cat svg { opacity: .55; flex: none; margin-top: 4px; }
.cat-all { padding-left: 4px; }
.cat-bare { padding-left: 26px; }
.i20 { width: 20px; height: 20px; }
.i22 { width: 22px; height: 22px; flex: none; }
.cat .i22 { margin-left: -1px; margin-right: -1px; }
.app { display: flex; align-items: center; gap: 5px; height: 36px; margin-bottom: 2px; padding: 0 0 4px 7px; border: 1px solid transparent; color: #ddd; font-size: 16px; white-space: nowrap; }
.app svg { margin-top: 4px; }
.app.active { background: #93b574; border-color: #222; color: #fff; }
.cats-bar { position: absolute; left: 238px; top: 8px; width: 5px; height: 545px; border-radius: 3px; background: #888; }
.apps-bar { position: absolute; left: 695px; top: 8px; width: 5px; height: 254px; border-radius: 3px; background: #888; }
.menu-info { display: flex; flex-direction: column; align-items: flex-end; padding-right: 30px; color: #ddd; font-size: 16px; line-height: 22px; }
.menu-info strong { color: #eee; font-size: 15px; }

/* bottom panel */
.panel { display: flex; align-items: center; flex: none; height: 41px; background: #2c2c2c; border-top: 1px solid #222; }
.menu-button { display: flex; align-items: center; gap: 6px; width: 89px; height: 40px; padding: 0 0 0 5px; background: #93b574; border: 0; color: #f0f8ff; font: 16px "Noto Sans", "Noto Sans Devanagari", "DejaVu Sans", sans-serif; flex: none; }
.gear { width: 32px; height: 32px; flex: none; }
.launcher { position: relative; display: flex; align-items: center; justify-content: center; width: 46px; height: 40px; padding-bottom: 3px; flex: none; }
.menu-button + .launcher { margin-left: 1px; }
.launcher.running::after { content: ""; position: absolute; left: 3px; right: 3px; bottom: 0; height: 2px; background: #93b574; }
.p30 { width: 29px; height: 29px; }
.p32 { width: 32px; height: 32px; }
.tray { margin-left: auto; padding-right: 4px; display: flex; align-items: center; color: #f4f4f4; font-size: 16px; white-space: nowrap; }
.tray-text { line-height: 1; }
.t-ico { width: 15px; height: 15px; flex: none; }
```
